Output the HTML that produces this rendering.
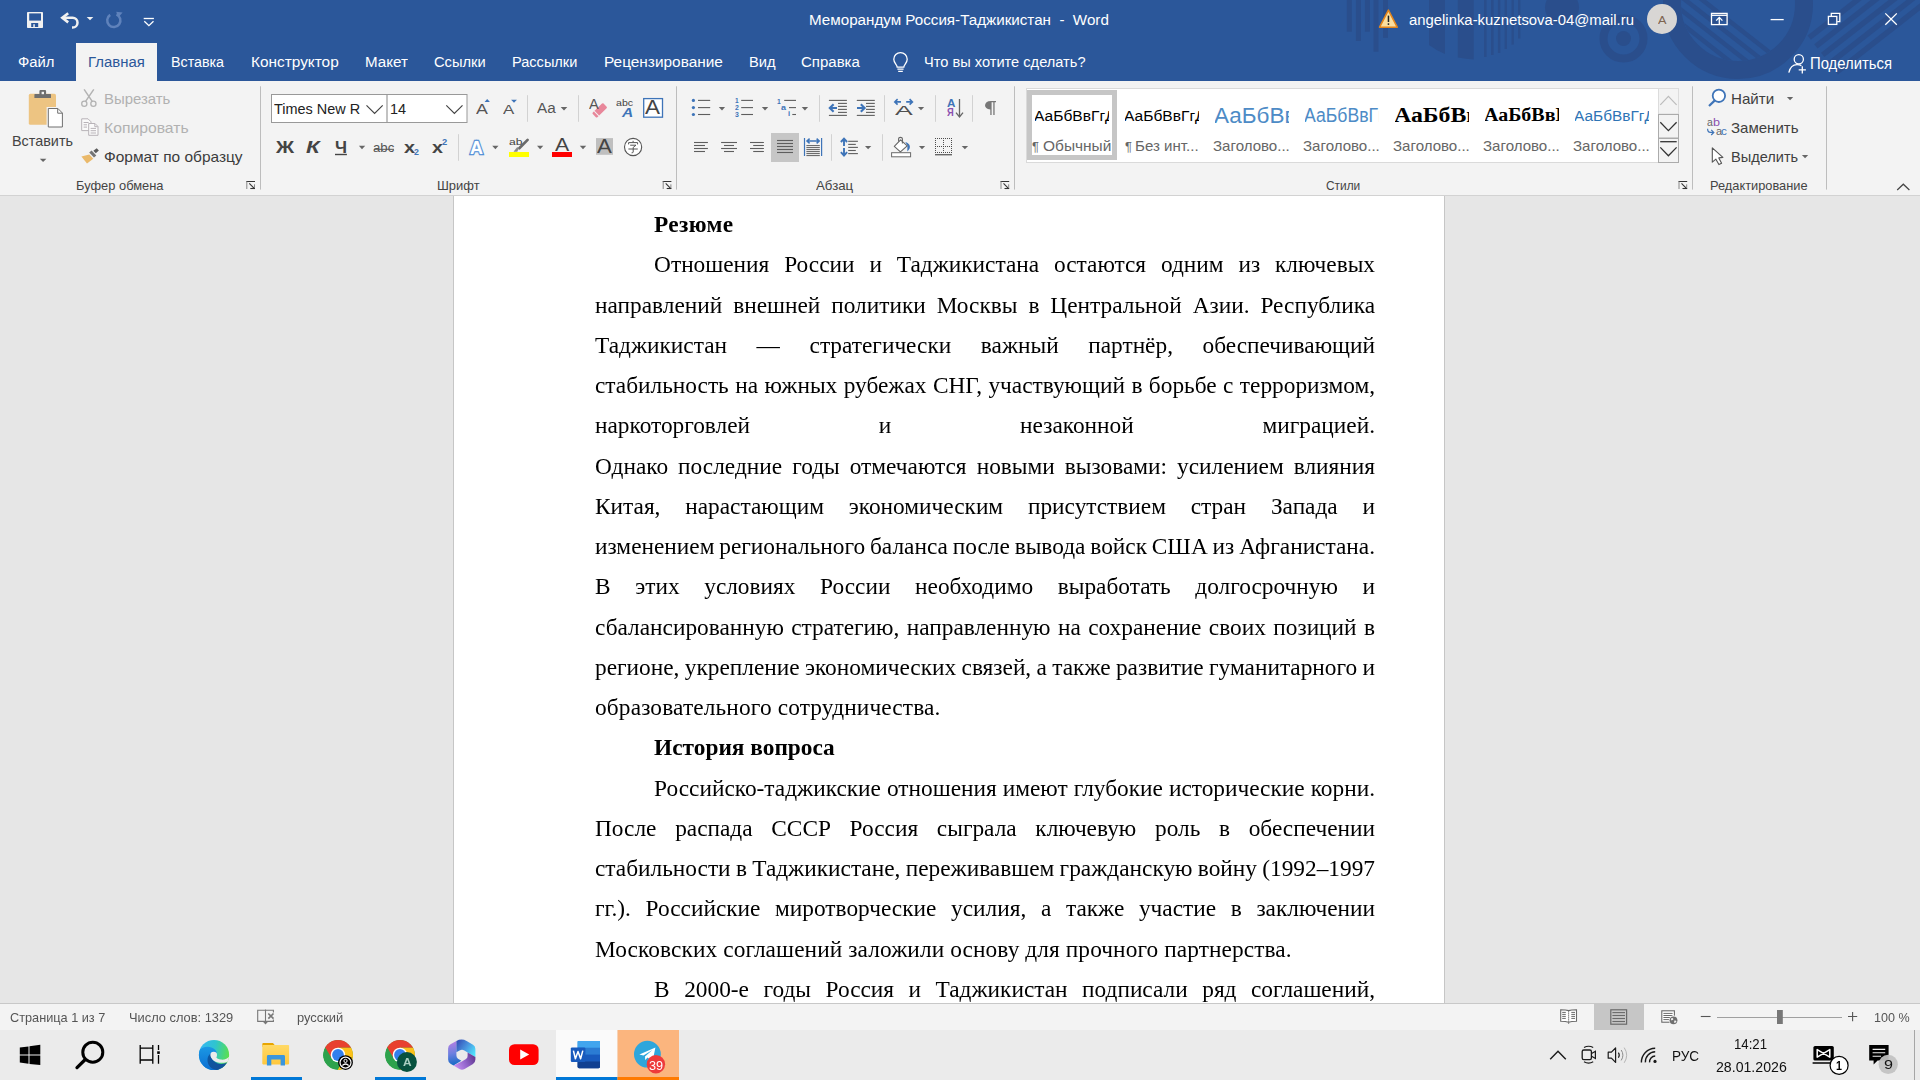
<!DOCTYPE html>
<html lang="ru"><head><meta charset="utf-8"><title>Word</title>
<style>
*{box-sizing:border-box;margin:0;padding:0}
html,body{width:1920px;height:1080px;overflow:hidden;background:#e6e6e6;font-family:"Liberation Sans",sans-serif;}
.a{position:absolute}
.t{position:absolute;white-space:nowrap;line-height:1;transform-origin:0 0;}
#hdr{left:0;top:0;width:1920px;height:81px;background:#2b579a;overflow:hidden}
#rib{left:0;top:81px;width:1920px;height:114px;background:#f3f3f3}
#ribb{left:0;top:195px;width:1920px;height:1px;background:#d2d2d2}
#doc{left:0;top:196px;width:1920px;height:807px;background:#e6e6e6;overflow:hidden}
#page{left:453px;top:-40px;width:992px;height:900px;background:#fff;border-left:1px solid #c6c6c6;border-right:1px solid #c6c6c6}
#txt{will-change:transform;left:594.9px;top:7.75px;width:780px;font-family:"Liberation Serif",serif;font-size:23.333px;line-height:40.25px;color:#000}
#txt div{height:40.25px;white-space:nowrap}
#txt div.i{padding-left:59.1px}
#txt div.b{font-weight:bold}
#sbb{left:0;top:1003px;width:1920px;height:1px;background:#c8c8c8}
#sb{left:0;top:1004px;width:1920px;height:26px;background:#f3f3f3}
#tb{left:0;top:1030px;width:1920px;height:50px;background:#ebebeb}
.vs{position:absolute;width:1px;background:#d0d0d0}
.gs{position:absolute;width:1px;background:#c4c4c4;top:86px;height:104px}
svg{position:absolute;overflow:visible}
</style></head>
<body>
<div id="hdr" class="a"><svg class="a" style="left:0;top:0" width="1920" height="81" viewBox="0 0 1920 81"><defs><clipPath id="cpin"><circle cx="1738" cy="4" r="57"/></clipPath><clipPath id="cpst"><circle cx="1440" cy="-62" r="122"/></clipPath></defs><rect x="1346.8" y="0" width="5" height="31.7" fill="#2a4e8c"/><rect x="1355.9" y="0" width="5" height="41" fill="#2a4e8c"/><rect x="1364.9" y="0" width="5" height="31.7" fill="#2a4e8c"/><rect x="1373.5" y="0" width="5" height="51.7" fill="#2a4e8c"/><rect x="1383" y="0" width="5" height="37.8" fill="#2a4e8c"/><path d="M1429,0 H1445 V54 Q1437,51 1429,45 Z" fill="#2a4e8c"/><path d="M1457.8,0 H1473.7 V59.5 Q1466,59 1457.8,57.4 Z" fill="#2a4e8c"/><rect x="1484" y="0" width="2.6" height="57" fill="#2a4e8c"/><rect x="1491" y="0" width="2.6" height="55" fill="#2a4e8c"/><rect x="1497.9" y="0" width="2.4" height="53" fill="#2a4e8c"/><rect x="1504.6" y="0" width="2.4" height="49" fill="#2a4e8c"/><rect x="1511.5" y="0" width="2.3" height="44.6" fill="#2a4e8c"/><rect x="1518" y="0" width="2.4" height="38.5" fill="#2a4e8c"/><circle cx="1562" cy="7.5" r="17" fill="#2a4e8c"/><circle cx="1623.5" cy="38.5" r="20" fill="none" stroke="#2a4e8c" stroke-width="8"/><circle cx="1623.5" cy="38.5" r="7.5" fill="#2a4e8c"/><circle cx="1738" cy="4" r="66" fill="none" stroke="#2a4e8c" stroke-width="18"/><g clip-path="url(#cpin)"><line x1="1665.3" y1="-29.0" x2="1791.4" y2="69.5" stroke="#2a4e8c" stroke-width="4.5"/><line x1="1658.8" y1="-20.7" x2="1784.9" y2="77.8" stroke="#2a4e8c" stroke-width="4.5"/><line x1="1652.3" y1="-12.5" x2="1778.4" y2="86.0" stroke="#2a4e8c" stroke-width="4.5"/><line x1="1645.9" y1="-4.2" x2="1772.0" y2="94.3" stroke="#2a4e8c" stroke-width="4.5"/><line x1="1639.4" y1="4.1" x2="1765.5" y2="102.6" stroke="#2a4e8c" stroke-width="4.5"/></g><line x1="1809.2" y1="37.6" x2="1903.7" y2="-36.3" stroke="#2a4e8c" stroke-width="5.5"/><line x1="1815.9" y1="46.3" x2="1910.5" y2="-27.6" stroke="#2a4e8c" stroke-width="5.5"/><line x1="1822.7" y1="54.9" x2="1917.3" y2="-18.9" stroke="#2a4e8c" stroke-width="5.5"/><line x1="1829.5" y1="63.6" x2="1924.1" y2="-10.3" stroke="#2a4e8c" stroke-width="5.5"/><line x1="1836.3" y1="72.3" x2="1930.8" y2="-1.6" stroke="#2a4e8c" stroke-width="5.5"/></svg><div class="a" style="left:76px;top:43px;width:81px;height:38px;background:#f3f3f3"></div></div><div id="rib" class="a"></div><div id="ribb" class="a"></div><div id="doc" class="a"><div id="page" class="a"></div><div id="txt" class="a"><div class="b i" style="letter-spacing:0.3px">Резюме</div><div class="i" style="word-spacing:9.053px">Отношения России и Таджикистана остаются одним из ключевых</div><div class="" style="word-spacing:5.125px">направлений внешней политики Москвы в Центральной Азии. Республика</div><div class="" style="word-spacing:23.775px">Таджикистан — стратегически важный партнёр, обеспечивающий</div><div class="" style="word-spacing:0.608px">стабильность на южных рубежах СНГ, участвующий в борьбе с терроризмом,</div><div class="" style="word-spacing:122.953px">наркоторговлей и незаконной миграцией.</div><div class="" style="word-spacing:4.232px">Однако последние годы отмечаются новыми вызовами: усилением влияния</div><div class="" style="word-spacing:18.984px">Китая, нарастающим экономическим присутствием стран Запада и</div><div class="" style="word-spacing:-0.979px">изменением регионального баланса после вывода войск США из Афганистана.</div><div class="" style="word-spacing:18.817px">В этих условиях России необходимо выработать долгосрочную и</div><div class="" style="word-spacing:1.567px">сбалансированную стратегию, направленную на сохранение своих позиций в</div><div class="" style="word-spacing:-0.490px">регионе, укрепление экономических связей, а также развитие гуманитарного и</div><div class="" style="letter-spacing:0.145px">образовательного сотрудничества.</div><div class="b i">История вопроса</div><div class="i" style="word-spacing:0.233px">Российско-таджикские отношения имеют глубокие исторические корни.</div><div class="" style="word-spacing:12.861px">После распада СССР Россия сыграла ключевую роль в обеспечении</div><div class="" style="word-spacing:-0.523px">стабильности в Таджикистане, переживавшем гражданскую войну (1992–1997</div><div class="" style="word-spacing:8.832px">гг.). Российские миротворческие усилия, а также участие в заключении</div><div class="" style="letter-spacing:0.097px">Московских соглашений заложили основу для прочного партнерства.</div><div class="i" style="word-spacing:8.681px">В 2000-е годы Россия и Таджикистан подписали ряд соглашений,</div></div></div><div id="sbb" class="a"></div><div id="sb" class="a"></div><div id="tb" class="a"></div><svg class="a" style="left:0;top:0" width="1920" height="81" viewBox="0 0 1920 81"><rect x="27" y="12" width="16" height="16" rx="0.8" fill="#f1f1f1"/><rect x="29.2" y="13.4" width="11.8" height="7.2" fill="#2b579a"/><rect x="31.2" y="23" width="7" height="4" fill="#2b579a"/><rect x="33.3" y="24.2" width="1.5" height="2.8" fill="#f1f1f1"/><path d="M68.2,13.2 L62.3,17.8 L68.2,22.4" fill="none" stroke="#f1f1f1" stroke-width="2.6" stroke-linejoin="miter"/><path d="M63,17.8 H72.6 A4.9,4.9 0 0 1 72.6,27.6 H72" fill="none" stroke="#f1f1f1" stroke-width="2.5"/><path d="M86.7,16.9 H93.3 L90,20.3 Z" fill="#f1f1f1"/><path d="M116.5,14.4 A6.6,6.6 0 1 1 110.2,14.9" fill="none" stroke="#5f82bb" stroke-width="2.5"/><path d="M116.2,11.8 L122.6,12.6 L118.3,17.5 Z" fill="#5f82bb"/><path d="M143.7,18.5 H153.9" fill="none" stroke="#fff" stroke-width="1.3"/><path d="M144.3,21.2 L148.9,25.6 L153.5,21.2" fill="none" stroke="#fff" stroke-width="1.3"/><path d="M897.2,67.2 C897.2,64.5 893.8,63.4 893.8,59.3 A6.7,6.7 0 0 1 907.2,59.3 C907.2,63.4 903.8,64.5 903.8,67.2 Z" fill="none" stroke="#fff" stroke-width="1.3"/><path d="M897.4,69.2 H903.6 M898.2,71.3 H902.8" fill="none" stroke="#fff" stroke-width="1.3"/><path d="M1388.4,10.2 L1397.2,27.2 H1379.6 Z" fill="#fbdf9f" stroke="#e3861d" stroke-width="1.6" stroke-linejoin="round"/><rect x="1387.7" y="15.6" width="1.5" height="6.4" fill="#222"/><rect x="1387.7" y="23.3" width="1.5" height="1.6" fill="#222"/><circle cx="1662" cy="19" r="15" fill="#d8d6d4"/><rect x="1711.5" y="13.4" width="15.6" height="11.2" fill="none" stroke="#fff" stroke-width="1.3"/><path d="M1711.5,15.3 H1727.1" fill="none" stroke="#fff" stroke-width="1.3"/><path d="M1719.3,24 V17.6 M1716.2,20.6 L1719.3,17.4 L1722.4,20.6" fill="none" stroke="#fff" stroke-width="1.3"/><path d="M1770.6,19.6 H1783.7" fill="none" stroke="#fff" stroke-width="1.3"/><rect x="1828.4" y="16.4" width="8.4" height="8" fill="none" stroke="#fff" stroke-width="1.3"/><path d="M1831.3,16 V13.4 H1839.8 V21.6 H1837.2" fill="none" stroke="#fff" stroke-width="1.3"/><path d="M1885.3,13.4 L1896.8,24.8 M1896.8,13.4 L1885.3,24.8" fill="none" stroke="#fff" stroke-width="1.3"/><circle cx="1798.8" cy="59.3" r="4.6" fill="none" stroke="#fff" stroke-width="1.3"/><path d="M1788.8,72.6 C1790.2,66.5 1794,64.6 1797,64.6 C1799,64.6 1800.4,65 1801.4,65.6" fill="none" stroke="#fff" stroke-width="1.3"/><path d="M1802.3,66.3 V73.4 M1798.7,69.8 H1805.9" fill="none" stroke="#fff" stroke-width="1.3"/></svg><svg class="a" style="left:0;top:0" width="1920" height="200" viewBox="0 0 1920 200"><path d="M260.5,86.3 V189.6" stroke="#bdbdbd" stroke-width="1"/><path d="M676.5,86.3 V189.6" stroke="#bdbdbd" stroke-width="1"/><path d="M1014.5,86.3 V189.6" stroke="#bdbdbd" stroke-width="1"/><path d="M1692.5,86.3 V189.6" stroke="#bdbdbd" stroke-width="1"/><path d="M1826.5,86.3 V189.6" stroke="#bdbdbd" stroke-width="1"/><path d="M527.5,95.2 V121.8" stroke="#d2d2d2" stroke-width="1"/><path d="M578.5,95.2 V121.8" stroke="#d2d2d2" stroke-width="1"/><path d="M819.5,95.2 V121.8" stroke="#d2d2d2" stroke-width="1"/><path d="M884.5,95.2 V121.8" stroke="#d2d2d2" stroke-width="1"/><path d="M935.5,95.2 V121.8" stroke="#d2d2d2" stroke-width="1"/><path d="M972.5,95.2 V121.8" stroke="#d2d2d2" stroke-width="1"/><path d="M458.5,134.2 V160.8" stroke="#d2d2d2" stroke-width="1"/><path d="M831.5,134.2 V160.8" stroke="#d2d2d2" stroke-width="1"/><path d="M882.5,134.2 V160.8" stroke="#d2d2d2" stroke-width="1"/><path d="M246.3,181.5 H255.0" stroke="#333" stroke-width="1" fill="none"/><path d="M246.8,181.5 V189" stroke="#888" stroke-width="1" fill="none"/><path d="M249.3,183.4 L254.2,188.3" stroke="#333" stroke-width="1.1" fill="none"/><path d="M254.5,184.3 V188.6" stroke="#888" stroke-width="1" fill="none"/><path d="M250.3,188.5 H255.0" stroke="#333" stroke-width="1.1" fill="none"/><path d="M662.7,181.5 H671.4" stroke="#333" stroke-width="1" fill="none"/><path d="M663.2,181.5 V189" stroke="#888" stroke-width="1" fill="none"/><path d="M665.7,183.4 L670.6,188.3" stroke="#333" stroke-width="1.1" fill="none"/><path d="M670.9,184.3 V188.6" stroke="#888" stroke-width="1" fill="none"/><path d="M666.7,188.5 H671.4" stroke="#333" stroke-width="1.1" fill="none"/><path d="M1000.5,181.5 H1009.2" stroke="#333" stroke-width="1" fill="none"/><path d="M1001.0,181.5 V189" stroke="#888" stroke-width="1" fill="none"/><path d="M1003.5,183.4 L1008.4,188.3" stroke="#333" stroke-width="1.1" fill="none"/><path d="M1008.7,184.3 V188.6" stroke="#888" stroke-width="1" fill="none"/><path d="M1004.5,188.5 H1009.2" stroke="#333" stroke-width="1.1" fill="none"/><path d="M1678.5,181.5 H1687.2" stroke="#333" stroke-width="1" fill="none"/><path d="M1679.0,181.5 V189" stroke="#888" stroke-width="1" fill="none"/><path d="M1681.5,183.4 L1686.4,188.3" stroke="#333" stroke-width="1.1" fill="none"/><path d="M1686.7,184.3 V188.6" stroke="#888" stroke-width="1" fill="none"/><path d="M1682.5,188.5 H1687.2" stroke="#333" stroke-width="1.1" fill="none"/><path d="M1897.2,190 L1903.3,184.2 L1909.4,190" fill="none" stroke="#444" stroke-width="1.2"/><rect x="28.8" y="93.8" width="27.2" height="31" rx="1.6" fill="#edc482"/><path d="M34.4,97.9 V94.6 Q34.4,94 35,94 H39.4 V91.2 Q39.4,90.1 40.5,90.1 H45 Q46.1,90.1 46.1,91.2 V94 H50.4 Q51,94 51,94.6 V97.9 Z" fill="#6f6f6f"/><rect x="41.6" y="91.8" width="2.4" height="2.4" fill="#f3f3f3"/><path d="M46.6,107 H58.6 L63.9,112.3 V128.5 H46.6 Z" fill="#f3f3f3"/><path d="M48.3,108.5 H57.9 L62.4,113 V127 H48.3 Z" fill="#fff" stroke="#6f6f6f" stroke-width="1"/><path d="M57.7,108.7 V113.2 H62.2" fill="none" stroke="#6f6f6f" stroke-width="1"/><path d="M39.8,158.8 H46.4 L43.1,162.1 Z" fill="#666"/><path d="M84.1,89.4 L92.4,101.6 M93.8,89.4 L85.4,101.6" stroke="#b3b3b3" stroke-width="1.5" fill="none"/><circle cx="84.3" cy="103.8" r="2.6" fill="none" stroke="#b3b3b3" stroke-width="1.3"/><circle cx="93.4" cy="103.8" r="2.6" fill="none" stroke="#b3b3b3" stroke-width="1.3"/><path d="M81.7,118.8 H88 L91,121.8 V130.6 H81.7 Z" fill="#fafafa" stroke="#b8b3b8" stroke-width="1"/><path d="M83.6,122.5 H88.6 M83.6,124.8 H87 M83.6,127.1 H87" stroke="#b8b3b8" stroke-width="1"/><path d="M88.7,123.5 H95 L98,126.5 V135.3 H88.7 Z" fill="#fafafa" stroke="#b8b3b8" stroke-width="1"/><path d="M94.8,123.7 V126.7 H97.8" fill="none" stroke="#b8b3b8" stroke-width="1"/><path d="M90.6,128.4 H96 M90.6,130.7 H96 M90.6,133 H96" stroke="#b8b3b8" stroke-width="1"/><path d="M81.4,156.6 L89.3,154.6 L93.3,158.7 L87,163.4 Z" fill="#eab96a"/><path d="M89.2,152.6 L91.6,150.6 L96.3,155.6 L94,157.6 Z" fill="#757575"/><path d="M93.4,150.7 L96.7,148.2 L98.9,150.5 L95.8,153.2 Z" fill="#5b5b5b"/><rect x="271.5" y="94.5" width="195.5" height="28" fill="#fff" stroke="#999" stroke-width="1"/><path d="M387,94.5 V122.5" stroke="#999" stroke-width="1.2"/><path d="M366.5,105.3 L374.6,113.4 L382.7,105.3" fill="none" stroke="#444" stroke-width="1.2"/><path d="M446.3,105.3 L454.4,113.4 L462.5,105.3" fill="none" stroke="#444" stroke-width="1.2"/><path d="M484.6,102 L487.2,99 L489.9,102 Z" fill="#3e74b8"/><path d="M511.1,99.8 H516.9 L514,102.8 Z" fill="#3e74b8"/><path d="M560.7,106.9 H567.3 L564.0,110.4 Z" fill="#666"/><g transform="translate(599.7,110.4) rotate(-44)"><rect x="-7.5" y="-3.3" width="15" height="6.6" rx="1.1" fill="#e8879a"/><rect x="-4.9" y="-3.3" width="0.9" height="6.6" fill="#f3f3f3"/></g><rect x="643.7" y="98.6" width="18.8" height="18.6" fill="#fff" stroke="#3e74b8" stroke-width="1.3"/><path d="M358.9,145.8 H365.2 L362.0,149.3 Z" fill="#666"/><path d="M492.2,145.8 H498.5 L495.4,149.3 Z" fill="#666"/><path d="M537.0,145.8 H543.3 L540.1,149.3 Z" fill="#666"/><path d="M579.8,145.8 H586.2 L583.0,149.3 Z" fill="#666"/><path d="M335,154.5 H346.9" stroke="#444" stroke-width="1.4"/><path d="M374,149.3 H394" stroke="#555" stroke-width="1"/><path d="M527.6,139.9 L519.3,148.2" stroke="#6a6a6a" stroke-width="2.7" stroke-linecap="round"/><path d="M518.7,148.3 L517.3,151.8 H513.5 L517.2,146.9 Z" fill="#8a8a8a"/><rect x="509" y="152" width="20" height="5" fill="#ffff00"/><rect x="552" y="152" width="20" height="5" fill="#ff0000"/><rect x="596" y="138.1" width="17" height="16.7" fill="#bfbfbf"/><circle cx="633.1" cy="147" r="8.6" fill="#fff" stroke="#555" stroke-width="1.1"/><path d="M633.1,140.8 V142.2 M628.6,144.4 V142.6 H637.6 V144.4 M630.2,145.2 H636 L633.2,147.4 V152 Q633.2,153 631.6,152.8 M628.4,149 H637.8" fill="none" stroke="#555" stroke-width="1"/></svg><svg class="a" style="left:0;top:0" width="1920" height="200" viewBox="0 0 1920 200"><circle cx="693.4" cy="100.4" r="1.6" fill="#3e74b8"/><path d="M698.0,100.4 H710.2" stroke="#5e5e5e" stroke-width="1.1"/><path d="M741.2,100.4 H753.0" stroke="#5e5e5e" stroke-width="1.1"/><circle cx="693.4" cy="107.6" r="1.6" fill="#3e74b8"/><path d="M698.0,107.6 H710.2" stroke="#5e5e5e" stroke-width="1.1"/><path d="M741.2,107.6 H753.0" stroke="#5e5e5e" stroke-width="1.1"/><circle cx="693.4" cy="114.5" r="1.6" fill="#3e74b8"/><path d="M698.0,114.5 H710.2" stroke="#5e5e5e" stroke-width="1.1"/><path d="M741.2,114.5 H753.0" stroke="#5e5e5e" stroke-width="1.1"/><path d="M718.8,106.9 H725.1 L722.0,110.4 Z" fill="#666"/><path d="M761.8,106.9 H768.2 L765.0,110.4 Z" fill="#666"/><path d="M801.7,106.9 H808.1 L804.9,110.4 Z" fill="#666"/><path d="M784.2,100.4 H796.0" stroke="#5e5e5e" stroke-width="1.1"/><path d="M789.0,107.6 H796.0" stroke="#5e5e5e" stroke-width="1.1"/><path d="M792.3,114.5 H796.0" stroke="#5e5e5e" stroke-width="1.1"/><path d="M828.9,100.4 H846.9" stroke="#5e5e5e" stroke-width="1.1"/><path d="M828.9,115.4 H846.9" stroke="#5e5e5e" stroke-width="1.1"/><path d="M838.0,103.4 H846.9" stroke="#5e5e5e" stroke-width="1.1"/><path d="M838.0,106.4 H846.9" stroke="#5e5e5e" stroke-width="1.1"/><path d="M838.0,109.4 H846.9" stroke="#5e5e5e" stroke-width="1.1"/><path d="M838.0,112.4 H846.9" stroke="#5e5e5e" stroke-width="1.1"/><path d="M856.8,100.4 H874.8" stroke="#5e5e5e" stroke-width="1.1"/><path d="M856.8,115.4 H874.8" stroke="#5e5e5e" stroke-width="1.1"/><path d="M866.0,103.4 H874.8" stroke="#5e5e5e" stroke-width="1.1"/><path d="M866.0,106.4 H874.8" stroke="#5e5e5e" stroke-width="1.1"/><path d="M866.0,109.4 H874.8" stroke="#5e5e5e" stroke-width="1.1"/><path d="M866.0,112.4 H874.8" stroke="#5e5e5e" stroke-width="1.1"/><path d="M829.6,108 H837 M833.6,104.3 L829.8,108 L833.6,111.7" fill="none" stroke="#3e74b8" stroke-width="2.1"/><path d="M857,108 H864.4 M860.8,104.3 L864.6,108 L860.8,111.7" fill="none" stroke="#3e74b8" stroke-width="2.1"/><path d="M894.6,101.9 H901 M897.6,99.2 L894.8,101.9 L897.6,104.6" fill="none" stroke="#3e74b8" stroke-width="1.6"/><path d="M906.2,101.9 H912.6 M909.6,99.2 L912.4,101.9 L909.6,104.6" fill="none" stroke="#3e74b8" stroke-width="1.6"/><path d="M917.9,107.0 H924.2 L921.0,110.2 Z" fill="#666"/><path d="M959.5,99 V116.8 M956,112.6 L959.5,117 L963,112.6" fill="none" stroke="#666" stroke-width="1.3"/><path d="M990.9,101 H996 V102.2 H994.6 V115 H993.3 V102.2 H991.6 V115 H990.3 V109.4 C983.2,109.4 983.2,101 990.9,101 Z" fill="#777"/><path d="M694.0,142.5 H707.9" stroke="#5e5e5e" stroke-width="1.1"/><path d="M721.1,142.5 H737.0" stroke="#5e5e5e" stroke-width="1.1"/><path d="M750.0,142.5 H763.9" stroke="#5e5e5e" stroke-width="1.1"/><path d="M694.0,145.5 H705.0" stroke="#5e5e5e" stroke-width="1.1"/><path d="M724.0,145.5 H734.0" stroke="#5e5e5e" stroke-width="1.1"/><path d="M753.2,145.5 H763.9" stroke="#5e5e5e" stroke-width="1.1"/><path d="M694.0,148.5 H707.9" stroke="#5e5e5e" stroke-width="1.1"/><path d="M721.1,148.5 H737.0" stroke="#5e5e5e" stroke-width="1.1"/><path d="M750.0,148.5 H763.9" stroke="#5e5e5e" stroke-width="1.1"/><path d="M694.0,151.5 H705.0" stroke="#5e5e5e" stroke-width="1.1"/><path d="M724.0,151.5 H734.0" stroke="#5e5e5e" stroke-width="1.1"/><path d="M753.2,151.5 H763.9" stroke="#5e5e5e" stroke-width="1.1"/><rect x="771" y="133" width="28" height="29" fill="#c6c6c6"/><path d="M777.0,140.5 H793.0" stroke="#5e5e5e" stroke-width="1.1"/><path d="M777.0,143.5 H793.0" stroke="#5e5e5e" stroke-width="1.1"/><path d="M777.0,146.5 H793.0" stroke="#5e5e5e" stroke-width="1.1"/><path d="M777.0,149.5 H793.0" stroke="#5e5e5e" stroke-width="1.1"/><path d="M777.0,152.5 H793.0" stroke="#5e5e5e" stroke-width="1.1"/><path d="M804.5,138 V156 M821.6,138 V156" stroke="#3e74b8" stroke-width="1.2"/><path d="M807,141 H819.2 M809.6,138.6 L807,141 L809.6,143.4 M816.6,138.6 L819.2,141 L816.6,143.4" fill="none" stroke="#3e74b8" stroke-width="1.5"/><path d="M806.4,145.6 H819.8" stroke="#5e5e5e" stroke-width="1"/><path d="M806.4,147.6 H819.8" stroke="#5e5e5e" stroke-width="1"/><path d="M806.4,149.6 H819.8" stroke="#5e5e5e" stroke-width="1"/><path d="M806.4,151.6 H819.8" stroke="#5e5e5e" stroke-width="1"/><path d="M806.4,153.6 H819.8" stroke="#5e5e5e" stroke-width="1"/><path d="M806.4,155.6 H819.8" stroke="#5e5e5e" stroke-width="1"/><path d="M844,139 V146 M844,148 V155.2 M840.9,142 L844,138.6 L847.1,142 M840.9,152.2 L844,155.6 L847.1,152.2" fill="none" stroke="#3e74b8" stroke-width="1.9"/><path d="M848.2,141.3 H857.9" stroke="#5e5e5e" stroke-width="1.1"/><path d="M848.2,144.4 H855.8" stroke="#5e5e5e" stroke-width="1.1"/><path d="M848.2,147.4 H857.9" stroke="#5e5e5e" stroke-width="1.1"/><path d="M848.2,150.5 H855.8" stroke="#5e5e5e" stroke-width="1.1"/><path d="M848.2,153.6 H857.9" stroke="#5e5e5e" stroke-width="1.1"/><path d="M865.0,145.9 H871.3 L868.1,149.3 Z" fill="#666"/><rect x="891.6" y="152.7" width="19" height="4.1" fill="#fff" stroke="#6a6a6a" stroke-width="1"/><path d="M905.3,142 C909.4,143 910.6,146.4 909.6,148.4 C908.8,150 908,150.6 907.4,151.6 C907.2,149 907.6,146.8 907.3,145.6 Z" fill="#3e74b8"/><path d="M894.3,146.4 L900.6,139.8 L907.2,145.8 L900.4,151.8 Z" fill="#fff" stroke="#666" stroke-width="1.1" stroke-linejoin="round"/><path d="M898.6,141.6 V138.8 Q898.6,137.4 900.4,137.4 Q902.4,137.4 902.4,138.8 V143.6" fill="none" stroke="#666" stroke-width="1.1"/><path d="M918.9,145.9 H925.2 L922.0,149.2 Z" fill="#666"/><path d="M935,138h1v1h-1zM935,140h1v1h-1zM935,142h1v1h-1zM935,144h1v1h-1zM935,146h1v1h-1zM935,148h1v1h-1zM935,150h1v1h-1zM935,152h1v1h-1zM937,138h1v1h-1zM937,146h1v1h-1zM937,152h1v1h-1zM939,138h1v1h-1zM939,146h1v1h-1zM939,152h1v1h-1zM941,138h1v1h-1zM941,146h1v1h-1zM941,152h1v1h-1zM943,138h1v1h-1zM943,140h1v1h-1zM943,142h1v1h-1zM943,144h1v1h-1zM943,146h1v1h-1zM943,148h1v1h-1zM943,150h1v1h-1zM943,152h1v1h-1zM945,138h1v1h-1zM945,146h1v1h-1zM945,152h1v1h-1zM947,138h1v1h-1zM947,146h1v1h-1zM947,152h1v1h-1zM949,138h1v1h-1zM949,146h1v1h-1zM949,152h1v1h-1zM951,138h1v1h-1zM951,140h1v1h-1zM951,142h1v1h-1zM951,144h1v1h-1zM951,146h1v1h-1zM951,148h1v1h-1zM951,150h1v1h-1zM951,152h1v1h-1z" fill="#4d4d4d"/><rect x="935" y="154" width="17" height="1.4" fill="#666"/><path d="M961.7,145.9 H968.1 L964.9,149.2 Z" fill="#666"/><circle cx="1718.9" cy="95.8" r="6.2" fill="#fff" stroke="#3e74b8" stroke-width="1.8"/><path d="M1714.6,100.6 L1709,106" stroke="#3e74b8" stroke-width="2.2"/><path d="M1786.9,96.9 H1793.2 L1790.1,100.2 Z" fill="#666"/><path d="M1707.6,128.8 Q1707.6,132.4 1710.4,132.4 H1713.4 M1711.2,129.8 L1713.8,132.4 L1711.2,135" fill="none" stroke="#3e74b8" stroke-width="1.2"/><path d="M1712.3,147.8 V162.2 L1715.9,159.2 L1718.9,164.6 L1721.6,163.2 L1718.8,157.9 L1722.9,157.4 Z" fill="#fff" stroke="#555" stroke-width="1.1" stroke-linejoin="round"/><path d="M1801.9,155.0 H1808.2 L1805.1,158.2 Z" fill="#666"/></svg><div class="a" style="left:1026px;top:88px;width:633px;height:75px;background:#fff;border:1px solid #dadada;border-right:none"></div><div class="a" style="left:1027px;top:90px;width:90px;height:70px;border:5px solid #c6c6c6;background:#fff"></div><svg class="a" style="left:0;top:0" width="1920" height="200" viewBox="0 0 1920 200"><rect x="1658.5" y="88.5" width="20" height="25.5" fill="#f3f3f3" stroke="#dcdcdc" stroke-width="1"/><rect x="1658.5" y="114.5" width="20" height="23.5" fill="#f3f3f3" stroke="#ababab" stroke-width="1"/><rect x="1658.5" y="138.5" width="20" height="24" fill="#f3f3f3" stroke="#ababab" stroke-width="1"/><path d="M1660.3,104.8 L1668.4,96.4 L1676.6,104.8" fill="none" stroke="#bcbcbc" stroke-width="1.2"/><path d="M1660.3,122.2 L1668.4,130.6 L1676.6,122.2" fill="none" stroke="#333" stroke-width="1.3"/><path d="M1660.3,147.4 L1668.4,155.8 L1676.6,147.4" fill="none" stroke="#333" stroke-width="1.3"/><path d="M1660.2,141.7 H1676.7" stroke="#333" stroke-width="1.3"/></svg><div class="a" style="left:1035px;top:84px;width:74px;height:80px;overflow:hidden"><span class="t" style="left:-0.96px;top:24px;font-size:15.2px;color:#000;transform:scaleX(1.0252);">АаБбВвГгДд</span></div><div class="a" style="left:1125px;top:84px;width:74px;height:80px;overflow:hidden"><span class="t" style="left:-0.96px;top:24px;font-size:15.2px;color:#000;transform:scaleX(1.0252);">АаБбВвГгДд</span></div><div class="a" style="left:1215px;top:84px;width:74px;height:80px;overflow:hidden"><span class="t" style="left:-1.34px;top:20px;font-size:22.8px;color:#4d8bc6;transform:scaleX(0.9875);">АаБбВвГг</span></div><div class="a" style="left:1305px;top:84px;width:74px;height:80px;overflow:hidden"><span class="t" style="left:-1.17px;top:22px;font-size:19.4px;color:#4d8bc6;transform:scaleX(0.9088);">АаБбВвГгД</span></div><div class="a" style="left:1395px;top:84px;width:74px;height:80px;overflow:hidden"><span class="t" style="left:-1.27px;top:21px;font-size:21.33px;color:#000;transform:scaleX(1.1166);font-family:'Liberation Serif',serif;font-weight:bold;">АаБбВвГг</span></div><div class="a" style="left:1485px;top:84px;width:74px;height:80px;overflow:hidden"><span class="t" style="left:-1.13px;top:22px;font-size:18.67px;color:#000;transform:scaleX(1.0707);font-family:'Liberation Serif',serif;font-weight:bold;">АаБбВвГг</span></div><div class="a" style="left:1575px;top:84px;width:74px;height:80px;overflow:hidden"><span class="t" style="left:-0.96px;top:24px;font-size:15.2px;color:#2e74b5;transform:scaleX(1.0151);">АаБбВвГгДд</span></div><svg class="a" style="left:0;top:1000px" width="1920" height="32" viewBox="0 1000 1920 32"><rect x="1594" y="1003.6" width="50" height="26.4" fill="#c6c6c6"/><path d="M265.5,1010.3 H257.7 V1021.4 H265.5 M265.5,1009.6 V1023.2 M263.6,1021.6 L265.5,1023.6 L267.4,1021.6" fill="none" stroke="#777" stroke-width="1.1"/><path d="M265.5,1010.3 H273.4 V1012.4 M273.4,1019.6 V1021.4 H265.5" fill="none" stroke="#777" stroke-width="1.1"/><path d="M268.3,1013.5 L273.5,1018.7 M273.5,1013.5 L268.3,1018.7" stroke="#777" stroke-width="1.7"/><path d="M1568.6,1010.6 Q1566,1009.8 1560.7,1009.8 V1021.3 Q1566,1021.3 1568.6,1022.2 Q1571.2,1021.3 1576.5,1021.3 V1009.8 Q1571.2,1009.8 1568.6,1010.6 Z" fill="#fff" stroke="#6a6a6a" stroke-width="1.1"/><path d="M1568.6,1010.4 V1023.8" stroke="#6a6a6a" stroke-width="1.1" stroke-dasharray="1.4,0.6"/><path d="M1562.2,1012.4 H1565.8 M1571.3,1012.4 H1575" stroke="#6a6a6a" stroke-width="1"/><path d="M1562.2,1014.4 H1565.8 M1571.3,1014.4 H1575" stroke="#6a6a6a" stroke-width="1"/><path d="M1562.2,1016.4 H1565.8 M1571.3,1016.4 H1575" stroke="#6a6a6a" stroke-width="1"/><path d="M1562.2,1018.4 H1565.8 M1571.3,1018.4 H1575" stroke="#6a6a6a" stroke-width="1"/><rect x="1610.8" y="1009.8" width="15.8" height="14.4" fill="none" stroke="#6a6a6a" stroke-width="1.2"/><path d="M1612.4,1012.6 H1625" stroke="#6a6a6a" stroke-width="1.1"/><path d="M1612.4,1015.5 H1625" stroke="#6a6a6a" stroke-width="1.1"/><path d="M1612.4,1018.5 H1625" stroke="#6a6a6a" stroke-width="1.1"/><path d="M1612.4,1021.5 H1625" stroke="#6a6a6a" stroke-width="1.1"/><rect x="1661.8" y="1010.8" width="12.6" height="11.4" fill="#fff" stroke="#6a6a6a" stroke-width="1.1"/><path d="M1663.4,1013.4 H1672.6" stroke="#6a6a6a" stroke-width="1"/><path d="M1663.4,1015.5 H1672.6" stroke="#6a6a6a" stroke-width="1"/><path d="M1663.4,1017.5 H1672.6" stroke="#6a6a6a" stroke-width="1"/><path d="M1663.4,1019.6 H1672.6" stroke="#6a6a6a" stroke-width="1"/><circle cx="1673.5" cy="1020.3" r="4.7" fill="#f3f3f3"/><circle cx="1673.5" cy="1020.3" r="3.9" fill="#6f6f6f"/><path d="M1671.2,1018.2 Q1673,1017.6 1673.4,1019.2 Q1672.4,1020.8 1671,1020.2 Z M1674.4,1020.6 Q1676.4,1020.2 1676.4,1022 Q1675,1023.4 1674,1022.4 Z" fill="#f3f3f3"/><path d="M1700.8,1016.5 H1710.6" stroke="#555" stroke-width="1.1"/><path d="M1717,1017.5 H1842" stroke="#a0a0a0" stroke-width="1"/><rect x="1777" y="1010" width="5.8" height="14" fill="#777"/><path d="M1848,1016.5 H1857.2 M1852.6,1012 V1021.2" stroke="#555" stroke-width="1.1"/></svg><svg class="a" style="left:0;top:1030px" width="1920" height="50" viewBox="0 1030 1920 50"><defs>
<linearGradient id="gEdge" x1="0" y1="0.3" x2="1" y2="0.5"><stop offset="0" stop-color="#36b6f5"/><stop offset="0.5" stop-color="#2fc4cf"/><stop offset="0.8" stop-color="#4ad77a"/><stop offset="1" stop-color="#62e045"/></linearGradient><linearGradient id="gEdge2" x1="0" y1="0" x2="0" y2="1"><stop offset="0" stop-color="#1b98e4"/><stop offset="1" stop-color="#0a6bd0"/></linearGradient><linearGradient id="gEdge3" x1="0" y1="0" x2="1" y2="1"><stop offset="0" stop-color="#0c59a4"/><stop offset="1" stop-color="#154f98"/></linearGradient>
<linearGradient id="gFold" x1="0" y1="0" x2="0" y2="1"><stop offset="0" stop-color="#ffd966"/><stop offset="1" stop-color="#ffc83d"/></linearGradient>
<linearGradient id="gM1" x1="0.4" y1="0" x2="0.5" y2="1"><stop offset="0" stop-color="#b57fe2"/><stop offset="0.5" stop-color="#6d7fe0"/><stop offset="1" stop-color="#1268c4"/></linearGradient><linearGradient id="gM3" x1="0" y1="0.7" x2="1" y2="0.3"><stop offset="0" stop-color="#c892f2"/><stop offset="0.5" stop-color="#9365cc"/><stop offset="1" stop-color="#60378f"/></linearGradient>
<linearGradient id="gM2" x1="0" y1="0.2" x2="1" y2="0.8"><stop offset="0" stop-color="#3552b8"/><stop offset="0.5" stop-color="#4a97e0"/><stop offset="1" stop-color="#4fe6ff"/></linearGradient>
<linearGradient id="gW" x1="0" y1="0" x2="0" y2="1"><stop offset="0" stop-color="#41a5ee"/><stop offset="0.5" stop-color="#2b7cd3"/><stop offset="1" stop-color="#103f91"/></linearGradient>
<clipPath id="cc1"><circle cx="338" cy="1055" r="15"/></clipPath>
<clipPath id="cc2"><circle cx="400" cy="1055" r="15"/></clipPath>
</defs><rect x="556" y="1030" width="61.5" height="50" fill="#fafafa"/><rect x="617.5" y="1030" width="61.5" height="50" fill="#fbb57e"/><rect x="251" y="1077" width="51" height="3" fill="#0078d7"/><rect x="375" y="1077" width="51" height="3" fill="#0078d7"/><rect x="556" y="1077" width="61.5" height="3" fill="#0078d7"/><rect x="617.5" y="1077" width="61.5" height="3" fill="#ff7a00"/><path d="M19.8,1047.6 L28.5,1046.4 V1054.6 H19.8 Z M29.5,1046.2 L40.3,1044.8 V1054.6 H29.5 Z M19.8,1055.5 H28.5 V1063.8 L19.8,1062.6 Z M29.5,1055.5 H40.3 V1065 L29.5,1063.9 Z" fill="#000"/><circle cx="92.8" cy="1052.2" r="10" fill="none" stroke="#000" stroke-width="3"/><path d="M85,1059.8 L77,1067.6" stroke="#000" stroke-width="3.3" stroke-linecap="round"/><path d="M140.2,1045 V1063.8 M152.8,1045 V1063.8 M140.2,1048.2 H152.8 M140.2,1060 H152.8 M158.5,1045 V1050 M158.5,1055 V1063.8" fill="none" stroke="#000" stroke-width="1.3"/><rect x="157.2" y="1051.3" width="2.6" height="2.6" fill="#000"/><clipPath id="ce"><circle cx="214" cy="1055" r="15.1"/></clipPath><g clip-path="url(#ce)"><rect x="198" y="1039" width="32" height="32" fill="url(#gEdge)"/><path d="M197,1052.5 C201,1047.2 206.5,1046 211.5,1047.4 C214.6,1048.4 216.4,1050.4 216.9,1053 L210,1056 L221,1072 L197,1072 Z" fill="url(#gEdge2)"/><path d="M210.7,1053.6 C207.6,1055.6 206.9,1059.6 207.9,1063 C209.4,1067.6 214,1070.4 218.6,1070 C223,1069.2 226.2,1066.2 227.4,1062.2 C223,1064.8 217.4,1064.4 214,1061 C211.6,1058.6 210.4,1056 210.7,1053.6 Z" fill="url(#gEdge3)"/><circle cx="213.7" cy="1055" r="3.3" fill="#ebebeb"/><path d="M210.9,1056.8 C212.4,1061.4 218,1064.4 227.4,1062 L231,1061 L231,1054 C228.6,1058.6 225,1059.9 221,1059.6 C218.5,1059.4 217,1058.6 216.3,1057.3 Z" fill="#ebebeb"/></g><path d="M262.3,1044 Q262.3,1043 263.3,1043 H273 L274.6,1045 V1047 H262.3 Z" fill="#e8a500"/><rect x="262.3" y="1045" width="26.8" height="19.4" rx="0.8" fill="url(#gFold)"/><path d="M266.9,1065.6 V1056.4 Q266.9,1055 268.3,1055 H283.6 Q285,1055 285,1056.4 V1065.6 H280.6 V1059.4 H271.3 V1065.6 Z" fill="#3a96dd"/><g clip-path="url(#cc1)"><circle cx="338" cy="1055" r="15.2" fill="#2da24c"/><polygon points="338.00,1047.80 358.00,1047.80 358.00,1035.00 318.00,1035.00 320.76,1039.55 331.76,1058.60 338.00,1055.00" fill="#e8402f"/><polygon points="338.00,1047.80 358.00,1047.80 358.00,1077.00 333.24,1077.65 344.24,1058.60 338.00,1055.00" fill="#fbc11b"/></g><circle cx="338" cy="1055" r="7.3" fill="#fff"/><circle cx="338" cy="1055" r="5.9" fill="#327fec"/><circle cx="345.5" cy="1062.6" r="7.4" fill="#000"/><circle cx="345.5" cy="1062.6" r="5.5" fill="none" stroke="#fff" stroke-width="1.2"/><circle cx="345.5" cy="1060.9" r="1.6" fill="none" stroke="#fff" stroke-width="1"/><path d="M342.4,1065.4 Q345.5,1062.6 348.6,1065.4" fill="none" stroke="#fff" stroke-width="1.3"/><g clip-path="url(#cc2)"><circle cx="400" cy="1055" r="15.2" fill="#2da24c"/><polygon points="400.00,1047.80 420.00,1047.80 420.00,1035.00 380.00,1035.00 382.76,1039.55 393.76,1058.60 400.00,1055.00" fill="#e8402f"/><polygon points="400.00,1047.80 420.00,1047.80 420.00,1077.00 395.24,1077.65 406.24,1058.60 400.00,1055.00" fill="#fbc11b"/></g><circle cx="400" cy="1055" r="7.3" fill="#fff"/><circle cx="400" cy="1055" r="5.9" fill="#327fec"/><circle cx="406.9" cy="1062" r="10" fill="#07523f"/><path d="M450.5,1044.2 Q448.1,1045.6 448.1,1048.4 V1059.6 Q448.1,1062.4 450.5,1063.8 L453.5,1065.5 L461.4,1060.8 L458,1058.7 Q456.4,1057.7 456.4,1055.6 V1040.9 Z" fill="url(#gM1)"/><path d="M456.4,1040.9 Q461.6,1038 466.6,1040.9 L473,1044.7 Q475.4,1046.1 475.4,1049 V1057 L467.6,1052.4 L464.4,1050.4 Q462,1049 459.6,1050.4 L456.4,1052.3 Z" fill="url(#gM2)"/><path d="M453.5,1065.5 L459.4,1068.9 Q462,1070.4 464.6,1068.9 L473,1063.9 Q475.4,1062.5 475.4,1059.6 V1057 L467.6,1052.4 V1056 Q467.6,1058 466,1059 L461.4,1061.7 Z" fill="url(#gM3)"/><rect x="509" y="1044.2" width="29.6" height="20.8" rx="5.5" fill="#ff0000"/><path d="M520.2,1049.6 L529.2,1054.6 L520.2,1059.6 Z" fill="#fff"/><rect x="577.6" y="1041" width="22.4" height="27.2" rx="1.4" fill="url(#gW)"/><rect x="577.6" y="1041" width="22.4" height="6.8" fill="#41a5ee"/><rect x="577.6" y="1047.8" width="22.4" height="6.8" fill="#2b7cd3"/><rect x="577.6" y="1054.6" width="22.4" height="6.8" fill="#185abd"/><path d="M577.6,1061.4 H600 V1066.8 Q600,1068.2 598.6,1068.2 H579 Q577.6,1068.2 577.6,1066.8 Z" fill="#103f91"/><rect x="570.8" y="1047.4" width="14.6" height="14.6" rx="1.2" fill="#185abd"/><path d="M573.4,1050.6 L575.4,1058.8 L578,1051.4 L580.6,1058.8 L582.8,1050.6" fill="none" stroke="#fff" stroke-width="1.5" stroke-linejoin="round"/><circle cx="647.4" cy="1054.2" r="13.4" fill="#2ea6dc"/><path d="M639.4,1054.4 L655.4,1047.6 L652.6,1061.4 L647.6,1057.6 L645.2,1060 L645,1056.4 L652.4,1050 L643.4,1055.6 Z" fill="#fff"/><circle cx="655.9" cy="1064.2" r="9.2" fill="#ee3b3b"/><path d="M1550.2,1059.2 L1558,1051.2 L1565.8,1059.2" fill="none" stroke="#1a1a1a" stroke-width="1.4"/><rect x="1582.2" y="1050" width="9.2" height="9.6" rx="1.6" fill="none" stroke="#1a1a1a" stroke-width="1.3"/><path d="M1591.6,1053.4 L1595.4,1051.2 V1058.4 L1591.6,1056.2" fill="none" stroke="#1a1a1a" stroke-width="1.2"/><path d="M1584,1047.6 Q1588.6,1045 1593.2,1047.6 M1584,1061.8 Q1588.6,1064.4 1593.2,1061.8" fill="none" stroke="#1a1a1a" stroke-width="1.1"/><path d="M1608.2,1052.2 H1611.4 L1615.6,1048 V1062.4 L1611.4,1058.2 H1608.2 Z" fill="none" stroke="#1a1a1a" stroke-width="1.2" stroke-linejoin="round"/><path d="M1618.4,1052.6 Q1620.2,1055.2 1618.4,1057.8" fill="none" stroke="#1a1a1a" stroke-width="1.1"/><path d="M1621.2,1050 Q1624.6,1055.2 1621.2,1060.4" fill="none" stroke="#8a8a8a" stroke-width="1"/><path d="M1624.2,1047.6 Q1629.2,1055.2 1624.2,1062.8" fill="none" stroke="#b4b4b4" stroke-width="1"/><circle cx="1655" cy="1061.4" r="1.6" fill="#1a1a1a"/><path d="M1649.6,1062.4 A5.8,5.8 0 0 1 1655.2,1056" fill="none" stroke="#1a1a1a" stroke-width="1.4"/><path d="M1645.4,1062.4 A10,10 0 0 1 1655.2,1051.8" fill="none" stroke="#1a1a1a" stroke-width="1.4"/><path d="M1641.4,1062.4 A14,14 0 0 1 1655.2,1048.2" fill="none" stroke="#1a1a1a" stroke-width="1.4"/><rect x="1813.4" y="1046" width="20.4" height="14.6" rx="1.6" fill="#000"/><path d="M1812.6,1063 H1834.6" stroke="#000" stroke-width="1.5"/><path d="M1817.2,1049.6 L1829.8,1057.2 V1049.6 L1817.2,1057.2 Z" fill="none" stroke="#fff" stroke-width="1.5" stroke-linejoin="round"/><circle cx="1839.1" cy="1065.4" r="9" fill="#fff" stroke="#000" stroke-width="1.2"/><path d="M1869.2,1045 H1888.6 V1060.6 H1877.6 L1873.6,1064.4 V1060.6 H1869.2 Z" fill="#000"/><path d="M1872.6,1049.4 H1885.2 M1872.6,1052.8 H1885.2 M1872.6,1056.2 H1881" stroke="#eee" stroke-width="1.1"/><circle cx="1888.2" cy="1064.4" r="9.6" fill="#c2c2c2" opacity="0.93"/><path d="M1914.5,1030 V1080" stroke="#a6a6a6" stroke-width="1"/></svg><span class="t" style="left:809.23px;top:12px;font-size:15.5px;color:#fff;transform:scaleX(0.9791);">Меморандум Россия-Таджикистан  -  Word</span><span class="t" style="left:1409.42px;top:12px;font-size:15.5px;color:#fff;transform:scaleX(0.9590);">angelinka-kuznetsova-04@mail.ru</span><span class="t" style="left:1658.12px;top:15px;font-size:11.5px;color:#7d6450;transform:scaleX(1.1014);">A</span><span class="t" style="left:18.23px;top:54px;font-size:15.5px;color:#fff;transform:scaleX(0.9591);">Файл</span><span class="t" style="left:87.52px;top:54px;font-size:15.5px;color:#2b579a;transform:scaleX(0.9619);">Главная</span><span class="t" style="left:170.72px;top:54px;font-size:15.5px;color:#fff;transform:scaleX(0.9206);">Вставка</span><span class="t" style="left:250.53px;top:54px;font-size:15.5px;color:#fff;transform:scaleX(0.9928);">Конструктор</span><span class="t" style="left:364.73px;top:54px;font-size:15.5px;color:#fff;transform:scaleX(0.9766);">Макет</span><span class="t" style="left:433.53px;top:54px;font-size:15.5px;color:#fff;transform:scaleX(0.9482);">Ссылки</span><span class="t" style="left:511.73px;top:54px;font-size:15.5px;color:#fff;transform:scaleX(0.9392);">Рассылки</span><span class="t" style="left:603.73px;top:54px;font-size:15.5px;color:#fff;transform:scaleX(0.9930);">Рецензирование</span><span class="t" style="left:748.73px;top:54px;font-size:15.5px;color:#fff;transform:scaleX(0.9466);">Вид</span><span class="t" style="left:801.23px;top:54px;font-size:15.5px;color:#fff;transform:scaleX(0.9677);">Справка</span><span class="t" style="left:923.73px;top:54px;font-size:15.5px;color:#fff;transform:scaleX(0.9428);">Что вы хотите сделать?</span><span class="t" style="left:1810.02px;top:56px;font-size:15.6px;color:#fff;transform:scaleX(0.9530);">Поделиться</span><span class="t" style="left:12.15px;top:133px;font-size:15px;color:#444;transform:scaleX(0.9592);">Вставить</span><span class="t" style="left:103.65px;top:91px;font-size:15px;color:#b1b1b1;transform:scaleX(0.9952);">Вырезать</span><span class="t" style="left:103.65px;top:120px;font-size:15px;color:#b1b1b1;transform:scaleX(1.0475);">Копировать</span><span class="t" style="left:103.65px;top:149px;font-size:15px;color:#3c3c3c;transform:scaleX(1.0304);">Формат по образцу</span><span class="t" style="left:75.79px;top:180px;font-size:12.2px;color:#444;transform:scaleX(1.0568);">Буфер обмена</span><span class="t" style="left:273.75px;top:101px;font-size:15px;color:#222;transform:scaleX(0.9636);">Times New R</span><span class="t" style="left:390.45px;top:101px;font-size:15px;color:#222;transform:scaleX(0.9648);">14</span><span class="t" style="left:436.99px;top:180px;font-size:12.2px;color:#444;transform:scaleX(1.0626);">Шрифт</span><span class="t" style="left:816.39px;top:180px;font-size:12.2px;color:#444;transform:scaleX(1.0882);">Абзац</span><span class="t" style="left:1325.99px;top:180px;font-size:12.2px;color:#444;transform:scaleX(0.9742);">Стили</span><span class="t" style="left:1709.59px;top:180px;font-size:12.2px;color:#444;transform:scaleX(1.0504);">Редактирование</span><span class="t" style="left:1730.85px;top:91px;font-size:15px;color:#404040;transform:scaleX(1.0091);">Найти</span><span class="t" style="left:1730.55px;top:120px;font-size:15px;color:#404040;transform:scaleX(1.0014);">Заменить</span><span class="t" style="left:1730.85px;top:149px;font-size:15px;color:#404040;transform:scaleX(0.9711);">Выделить</span><span class="t" style="left:9.86px;top:1012px;font-size:12.8px;color:#555;transform:scaleX(0.9933);">Страница 1 из 7</span><span class="t" style="left:128.86px;top:1012px;font-size:12.8px;color:#555;transform:scaleX(1.0039);">Число слов: 1329</span><span class="t" style="left:296.86px;top:1012px;font-size:12.8px;color:#555;transform:scaleX(1.0078);">русский</span><span class="t" style="left:1874.16px;top:1012px;font-size:12.8px;color:#555;transform:scaleX(0.9830);">100 %</span><span class="t" style="left:1671.75px;top:1048px;font-size:15px;color:#111;transform:scaleX(0.9019);">РУС</span><span class="t" style="left:1733.52px;top:1036px;font-size:15.5px;color:#111;transform:scaleX(0.8519);">14:21</span><span class="t" style="left:1715.82px;top:1059px;font-size:15.5px;color:#111;transform:scaleX(0.9120);">28.01.2026</span><span class="t" style="left:276.07px;top:140px;font-size:16.6px;color:#444;transform:scaleX(1.2040);font-weight:bold">Ж</span><span class="t" style="left:306.17px;top:140px;font-size:16.6px;color:#444;transform:scaleX(1.3388);font-weight:bold;font-style:italic">К</span><span class="t" style="left:334.89px;top:139px;font-size:16.2px;color:#444;transform:scaleX(1.0567);font-weight:bold">Ч</span><span class="t" style="left:373.35px;top:141px;font-size:13px;color:#555;transform:scaleX(1.0158);">abc</span><span class="t" style="left:404.18px;top:139px;font-size:16.5px;color:#444;transform:scaleX(1.2027);font-weight:bold">x</span><span class="t" style="left:414.49px;top:149px;font-size:8.2px;color:#3e74b8;transform:scaleX(1.0784);font-weight:bold">2</span><span class="t" style="left:432.07px;top:139px;font-size:16.5px;color:#444;transform:scaleX(1.1918);font-weight:bold">x</span><span class="t" style="left:442.39px;top:139px;font-size:8.2px;color:#3e74b8;transform:scaleX(1.1441);font-weight:bold">2</span><span class="t" style="left:475.55px;top:101px;font-size:15.1px;color:#555;transform:scaleX(1.1818);">A</span><span class="t" style="left:502.62px;top:103px;font-size:13.5px;color:#555;transform:scaleX(1.2478);">A</span><span class="t" style="left:536.95px;top:100px;font-size:15.1px;color:#555;transform:scaleX(1.0131);">Aa</span><span class="t" style="left:588.59px;top:97px;font-size:14.2px;color:#555;transform:scaleX(1.0265);">A</span><span class="t" style="left:616.42px;top:98px;font-size:9.6px;color:#444;transform:scaleX(1.1029);">abc</span><span class="t" style="left:621.93px;top:106px;font-size:13.4px;color:#3e74b8;transform:scaleX(1.1621);font-weight:bold;font-style:italic">A</span><span class="t" style="left:645.01px;top:98px;font-size:19.8px;color:#444;transform:scaleX(1.1346);">A</span><span class="t" style="left:470.35px;top:138px;font-size:19px;color:#fff;transform:scaleX(0.9465);font-weight:bold;-webkit-text-stroke:2.6px #4b88d2;paint-order:stroke fill;text-shadow:0 0 2.5px #9cc4ef">A</span><span class="t" style="left:508.92px;top:137px;font-size:9.6px;color:#444;transform:scaleX(1.2613);">ab</span><span class="t" style="left:554.89px;top:136px;font-size:18.2px;color:#444;transform:scaleX(1.1713);">A</span><span class="t" style="left:597.13px;top:137px;font-size:19.3px;color:#444;transform:scaleX(1.1518);">A</span><span class="t" style="left:894.73px;top:104px;font-size:13.4px;color:#505050;transform:scaleX(1.9849);">A</span><span class="t" style="left:734.68px;top:98px;font-size:6.4px;color:#3e74b8;transform:scaleX(1.0218);font-weight:bold">1</span><span class="t" style="left:734.68px;top:105px;font-size:6.4px;color:#3e74b8;transform:scaleX(1.0779);font-weight:bold">2</span><span class="t" style="left:734.68px;top:112px;font-size:6.4px;color:#3e74b8;transform:scaleX(1.0779);font-weight:bold">3</span><span class="t" style="left:777.35px;top:98px;font-size:7px;color:#3e74b8;transform:scaleX(0.9728);font-weight:bold">1</span><span class="t" style="left:781.40px;top:104px;font-size:8px;color:#3e74b8;transform:scaleX(1.1228);font-weight:bold">a</span><span class="t" style="left:788.25px;top:110px;font-size:7px;color:#3e74b8;transform:scaleX(1.0752);font-weight:bold">i</span><span class="t" style="left:946.54px;top:98px;font-size:11.2px;color:#3e74b8;transform:scaleX(1.0403);font-weight:bold">A</span><span class="t" style="left:946.74px;top:107px;font-size:11.2px;color:#8b4fb0;transform:scaleX(0.8351);font-weight:bold">Я</span><span class="t" style="left:1707.35px;top:117px;font-size:11px;color:#666;transform:scaleX(0.9469);">a</span><span class="t" style="left:1713.25px;top:117px;font-size:11px;color:#8b4fb0;transform:scaleX(1.1429);">b</span><span class="t" style="left:1715.57px;top:126px;font-size:10.6px;color:#666;transform:scaleX(1.0430);">a</span><span class="t" style="left:1721.47px;top:126px;font-size:10.6px;color:#3e74b8;transform:scaleX(1.1063);">c</span><span class="t" style="left:1031.75px;top:140px;font-size:13px;color:#666;transform:scaleX(0.9879);">¶</span><span class="t" style="left:1042.55px;top:138px;font-size:15px;color:#666;transform:scaleX(1.0315);">Обычный</span><span class="t" style="left:1124.55px;top:140px;font-size:13px;color:#666;transform:scaleX(0.9879);">¶</span><span class="t" style="left:1135.45px;top:138px;font-size:15px;color:#666;transform:scaleX(1.0050);">Без инт...</span><span class="t" style="left:1213.25px;top:138px;font-size:15px;color:#666;transform:scaleX(1.0043);">Заголово...</span><span class="t" style="left:1303.25px;top:138px;font-size:15px;color:#666;transform:scaleX(1.0043);">Заголово...</span><span class="t" style="left:1393.25px;top:138px;font-size:15px;color:#666;transform:scaleX(1.0043);">Заголово...</span><span class="t" style="left:1483.25px;top:138px;font-size:15px;color:#666;transform:scaleX(1.0043);">Заголово...</span><span class="t" style="left:1573.25px;top:138px;font-size:15px;color:#666;transform:scaleX(1.0043);">Заголово...</span><span class="t" style="left:648.95px;top:1059px;font-size:13px;color:#fff;transform:scaleX(0.9745);">39</span><span class="t" style="left:402.56px;top:1057px;font-size:10.8px;color:#a9cfc1;transform:scaleX(1.0982);font-weight:bold">A</span><span class="t" style="left:1835.92px;top:1059px;font-size:13.6px;color:#000;transform:scaleX(0.7881);font-weight:bold">1</span><span class="t" style="left:1883.72px;top:1058px;font-size:13.6px;color:#111;transform:scaleX(1.1848);">9</span>
</body></html>
